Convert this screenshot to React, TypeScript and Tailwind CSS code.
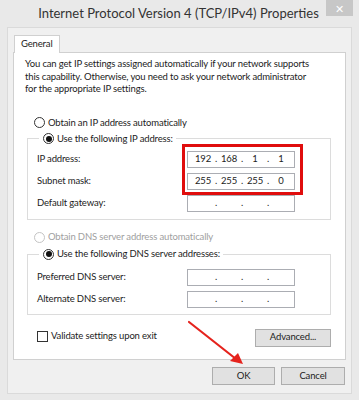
import type { ReactNode } from "react";

const font = { fontFamily: 'Lato, "Noto Sans", sans-serif' };

function Radio({ checked = false, disabled = false }: { checked?: boolean; disabled?: boolean }) {
  return (
    <span
      className={
        "inline-flex items-center justify-center w-[11px] h-[11px] rounded-full border bg-white shrink-0 " +
        (disabled ? "border-[#c4c4c4] bg-[#f4f4f4]" : "border-[#333]")
      }
    >
      {checked && <span className="w-[6px] h-[6px] rounded-full bg-[#111]" />}
    </span>
  );
}

function IpBox({ parts = ["", "", "", ""] }: { parts?: string[] }) {
  return (
    <div className="flex items-center w-[108px] h-[17px] border border-[#abadb3] bg-white pl-[4px] text-[#222]">
      {parts.map((p, i) => (
        <div key={i} className="flex items-center">
          <span className="w-[22px] text-center">{p}</span>
          {i < 3 && <span className="w-[4px] text-center">.</span>}
        </div>
      ))}
    </div>
  );
}

function Row({ label, children }: { label: string; children: ReactNode }) {
  return (
    <div className="flex items-center justify-between h-[17px]">
      <span>{label}</span>
      {children}
    </div>
  );
}

function Btn({ children, w }: { children: ReactNode; w: string }) {
  return (
    <button className={"h-[18px] border border-[#adadad] bg-[#e1e1e1] text-[#222] flex items-center justify-center " + w}>
      {children}
    </button>
  );
}

export default function App() {
  return (
    <div className="relative w-[359px] h-[400px] bg-[#e9e9e9] flex flex-col text-[9.5px] tracking-[-0.15px] text-[#1c1c1c] overflow-hidden whitespace-nowrap" style={font}>
      {/* title bar */}
      <div className="flex items-start h-[27px] pl-[7px] pr-[6px]">
        <div className="flex-1 text-center text-[13px] tracking-normal text-[#333] pt-[4px] pl-[24px]">
          Internet Protocol Version 4 (TCP/IPv4) Properties
        </div>
        <div className="w-[27px] h-[16px] bg-[#c7c7c7] text-white flex items-center justify-center text-[11px] leading-none">
          ✕
        </div>
      </div>

      {/* client area */}
      <div className="flex flex-col mx-[7px] h-[367px] bg-[#f0f0f0] border border-[#dadada] px-[5px] pt-[7px]">
        <div className="flex pl-px">
          <div className="relative z-10 -mb-px h-[18px] px-[6px] border border-b-0 border-[#d0d0d0] bg-white flex items-center">
            General
          </div>
        </div>
        <div className="flex flex-col h-[308px] border border-[#d0d0d0] bg-white pl-[11px] pr-[13px] pt-[5px]">
          <p className="leading-[12.5px]">
            You can get IP settings assigned automatically if your network supports
            <br />
            this capability. Otherwise, you need to ask your network administrator
            <br />
            for the appropriate IP settings.
          </p>

          <div className="flex items-center gap-[3px] mt-[20px] pl-[9px]">
            <Radio />
            <span>Obtain an IP address automatically</span>
          </div>

          <fieldset className="border border-[#dcdcdc] ml-[2px] mr-[1px] mt-[2px] px-[9px] pb-[7px] flex flex-col">
            <legend className="flex items-center gap-[3px] pl-[4px] pr-[3px] ml-[2px]">
              <Radio checked />
              <span>Use the following IP address:</span>
            </legend>
            <div className="flex flex-col gap-[5px] pt-[5px] pr-[26px]">
              <Row label="IP address:">
                <IpBox parts={["192", "168", "1", "1"]} />
              </Row>
              <Row label="Subnet mask:">
                <IpBox parts={["255", "255", "255", "0"]} />
              </Row>
              <Row label="Default gateway:">
                <IpBox />
              </Row>
            </div>
          </fieldset>

          <div className="flex items-center gap-[3px] mt-[10px] pl-[9px] text-[#a0a0a0]">
            <Radio disabled />
            <span>Obtain DNS server address automatically</span>
          </div>

          <fieldset className="border border-[#dcdcdc] ml-[2px] mr-[1px] mt-[3px] px-[9px] pb-[6px] flex flex-col">
            <legend className="flex items-center gap-[3px] pl-[4px] pr-[3px] ml-[2px]">
              <Radio checked />
              <span>Use the following DNS server addresses:</span>
            </legend>
            <div className="flex flex-col gap-[5px] pt-[7px] pr-[26px]">
              <Row label="Preferred DNS server:">
                <IpBox />
              </Row>
              <Row label="Alternate DNS server:">
                <IpBox />
              </Row>
            </div>
          </fieldset>

          <div className="flex items-center justify-between mt-[14px] pl-[12px] pr-[1px]">
            <div className="flex items-center gap-[3px] -mt-[3px]">
              <span className="w-[11px] h-[11px] border border-[#333] bg-white" />
              <span>Validate settings upon exit</span>
            </div>
            <Btn w="w-[76px]">Advanced...</Btn>
          </div>
        </div>

        <div className="flex justify-end gap-[6px] mt-[7px] pr-px">
          <Btn w="w-[63px]">OK</Btn>
          <Btn w="w-[64px]">Cancel</Btn>
        </div>
      </div>

      {/* annotations */}
      <div className="absolute left-[182px] top-[144px] w-[121px] h-[51px] border-[3px] border-[#e00d0d]" />
      <svg className="absolute left-0 top-0" width="359" height="400" viewBox="0 0 359 400">
        <line x1="189" y1="322" x2="236" y2="359" stroke="#e5231d" strokeWidth="2.2" strokeLinecap="round" />
        <polygon points="243,364 230,361 238,353" fill="#e5231d" />
      </svg>
    </div>
  );
}
